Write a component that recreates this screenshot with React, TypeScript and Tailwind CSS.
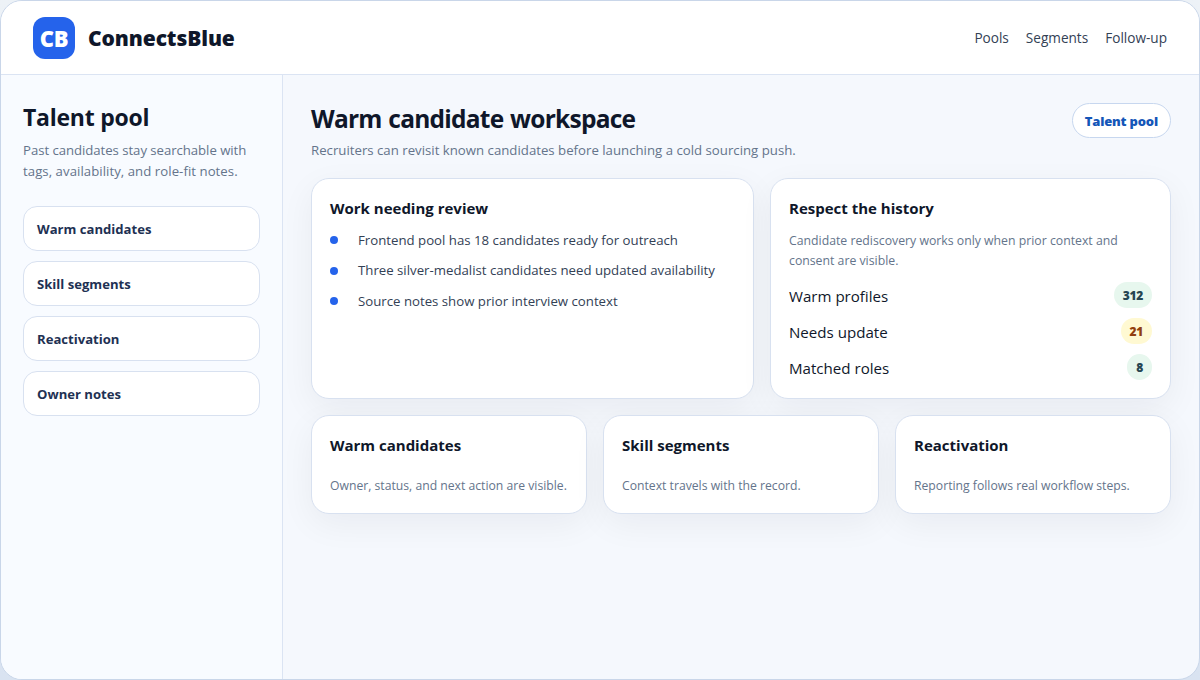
import clsx from 'clsx'

const NAV = ['Pools', 'Segments', 'Follow-up']

const SEGMENTS = ['Warm candidates', 'Skill segments', 'Reactivation', 'Owner notes']

const REVIEW_ITEMS = [
  'Frontend pool has 18 candidates ready for outreach',
  'Three silver-medalist candidates need updated availability',
  'Source notes show prior interview context',
]

const STATS = [
  { label: 'Warm profiles', value: 312, warn: false },
  { label: 'Needs update', value: 21, warn: true },
  { label: 'Matched roles', value: 8, warn: false },
]

const SUMMARY = [
  { title: 'Warm candidates', text: 'Owner, status, and next action are visible.' },
  { title: 'Skill segments', text: 'Context travels with the record.' },
  { title: 'Reactivation', text: 'Reporting follows real workflow steps.' },
]

type CardProps = {
  title: string
  className?: string
  children: React.ReactNode
}

function Card({ title, className, children }: CardProps) {
  return (
    <section
      className={clsx(
        'rounded-[18px] border border-[#d8e1f0] bg-white px-[18px] shadow-[0_10px_34px_rgba(15,23,42,0.055)]',
        className,
      )}
    >
      <h3 className="pt-[18px] text-[15px] leading-[22px] font-bold">{title}</h3>
      {children}
    </section>
  )
}

function Header() {
  return (
    <header className="flex h-[74px] shrink-0 items-center justify-between border-b border-[#dbe4f3] bg-white px-8">
      <div className="flex items-center gap-[13px]">
        <div className="flex size-[42px] items-center justify-center rounded-xl bg-[#2563eb] pt-0.5 text-[22px] font-extrabold tracking-[-0.2px] text-white">
          CB
        </div>
        <span className="pt-[3px] text-[21px] font-extrabold tracking-[-0.1px]">ConnectsBlue</span>
      </div>
      <nav className="flex gap-[17px] pt-0.5 text-[13.6px] text-[#334155]">
        {NAV.map((item) => (
          <a key={item}>{item}</a>
        ))}
      </nav>
    </header>
  )
}

function Sidebar() {
  return (
    <aside className="w-[282px] shrink-0 border-r border-[#dbe4f3] bg-[#f8fbff] px-[22px] pt-[26px]">
      <h2 className="text-[23px] leading-8 font-bold tracking-[-0.25px]">Talent pool</h2>
      <p className="mt-[7px] text-[13.2px] leading-[21px] whitespace-nowrap text-[#64748b]">
        <span className="tracking-[-0.05px]">Past candidates stay searchable with</span>
        <br />
        <span className="tracking-[0.05px]">tags, availability, and role-fit notes.</span>
      </p>
      <div className="mt-6 flex flex-col gap-2.5">
        {SEGMENTS.map((segment) => (
          <div
            key={segment}
            className="flex h-[45px] items-center rounded-[14px] border border-[#d8e1f0] bg-white px-[13px] pt-0.5 text-[13.1px] font-bold text-[#1e3153]"
          >
            {segment}
          </div>
        ))}
      </div>
    </aside>
  )
}

export default function App() {
  return (
    <div className="h-[680px] w-[1200px] bg-linear-to-b from-[#edf2f7] to-[#d9e3f1] font-['Open_Sans',sans-serif] text-[#0f172a]">
      <div className="flex h-full flex-col overflow-hidden rounded-[22px] border border-[#c9d6e9] bg-[#f5f8fd]">
        <Header />
        <div className="flex min-h-0 flex-1">
          <Sidebar />
          <main className="flex-1 px-7 pt-7">
            <div className="flex h-[75px] items-start justify-between">
              <div>
                <h1 className="text-[24.5px] leading-[31px] font-bold tracking-[-0.75px] [word-spacing:1px]">
                  Warm candidate workspace
                </h1>
                <p className="mt-1.5 text-[13.23px] leading-5 text-[#64748b]">
                  Recruiters can revisit known candidates before launching a cold sourcing push.
                </p>
              </div>
              <span className="flex h-[35px] items-center rounded-full border border-[#c7d7ef] bg-white px-3 pt-0.5 text-[13px] font-extrabold tracking-[-0.18px] text-[#1456b8]">
                Talent pool
              </span>
            </div>

            <div className="grid h-[221px] grid-cols-[443px_401px] gap-4">
              <Card title="Work needing review">
                <ul className="mt-1.5 flex flex-col text-[13.22px] text-[#334155]">
                  {REVIEW_ITEMS.map((item) => (
                    <li key={item} className="flex h-[30.4px] items-center gap-5 whitespace-nowrap">
                      <span className="size-2 rounded-full bg-[#2563eb]" />
                      <span className="pt-px">{item}</span>
                    </li>
                  ))}
                </ul>
              </Card>
              <Card title="Respect the history">
                <p className="mt-3 text-[12.28px] leading-5 whitespace-nowrap text-[#64748b]">
                  Candidate rediscovery works only when prior context and
                  <br />
                  consent are visible.
                </p>
                <div className="mt-[11px] flex flex-col gap-2.5">
                  {STATS.map(({ label, value, warn }) => (
                    <div key={label} className="flex h-[26px] items-center justify-between text-[15.1px]">
                      <span className="pt-0.5">{label}</span>
                      <span
                        className={clsx(
                          'flex h-[26px] items-center rounded-full px-[9px] pt-0.5 text-[12px] font-extrabold tracking-[-0.3px]',
                          warn ? 'bg-[#fff9d2] text-[#92400e]' : 'bg-[#e7f7ee] text-[#264653]',
                        )}
                      >
                        {value}
                      </span>
                    </div>
                  ))}
                </div>
              </Card>
            </div>

            <div className="mt-4 grid grid-cols-3 gap-4">
              {SUMMARY.map(({ title, text }) => (
                <Card key={title} title={title} className="h-[99px]">
                  <p className="mt-5 text-[12.2px] leading-5 whitespace-nowrap text-[#64748b]">{text}</p>
                </Card>
              ))}
            </div>
          </main>
        </div>
      </div>
    </div>
  )
}
